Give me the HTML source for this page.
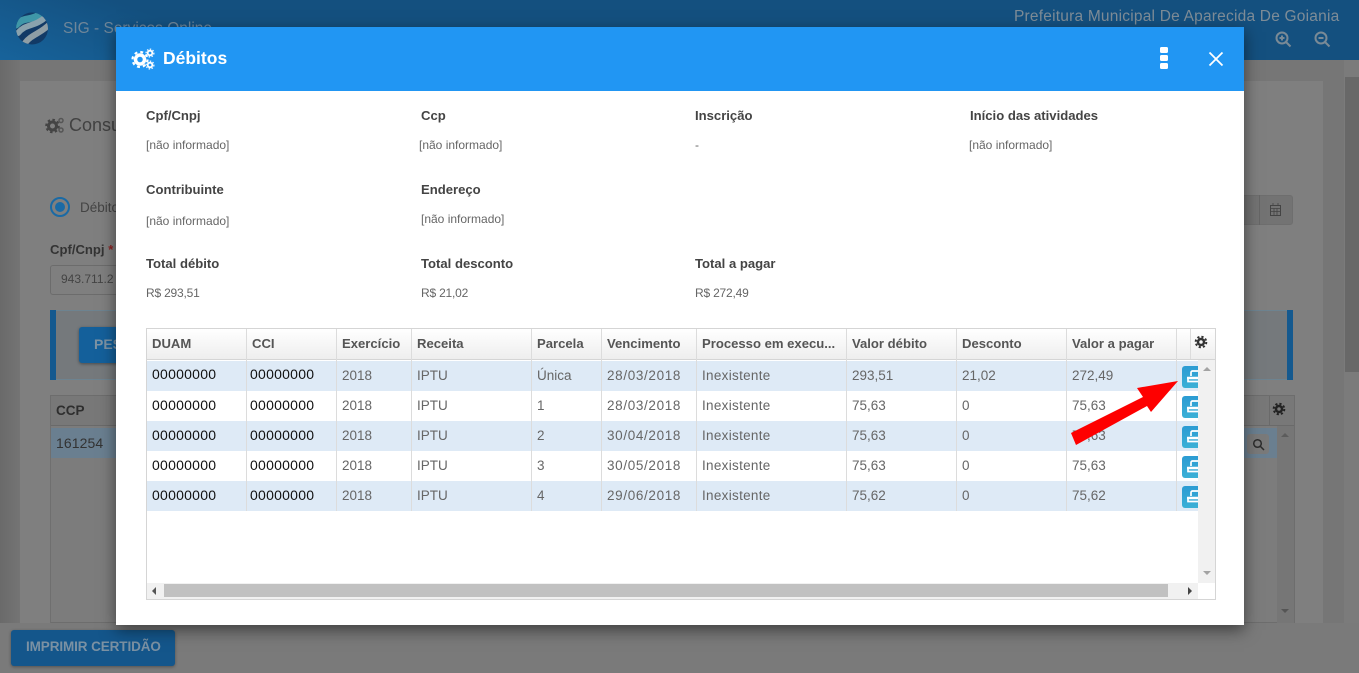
<!DOCTYPE html>
<html lang="pt"><head><meta charset="utf-8"><title>Débitos</title>
<style>
*{box-sizing:border-box}
html,body{margin:0;padding:0;width:1359px;height:673px;overflow:hidden;background:#7a7a7a;font-family:"Liberation Sans",sans-serif}
.a{position:absolute;white-space:nowrap}
.b{position:absolute}
.lbl{font-weight:bold;font-size:13.1px;color:#444;line-height:16px}
.val{font-size:12px;color:#666;line-height:14px}
.m{letter-spacing:-.2px}
.th{position:absolute;top:330px;height:30px;line-height:28px;font-weight:bold;font-size:13.1px;color:#555;padding-left:5px;white-space:nowrap;overflow:hidden}
.td{position:absolute;height:30px;line-height:30px;font-size:13.5px;color:#666;padding-left:5px;white-space:nowrap}
.d{letter-spacing:.65px}
.i{letter-spacing:.3px}
.z{color:#111;font-size:14px;letter-spacing:.25px}
.vl{position:absolute;width:1px;background:#dcdcdc}
.btn{position:absolute;left:1182px;width:16px;height:22px;background:linear-gradient(#2b9bd3,#3bb0d6);border-radius:3px 0 0 3px;overflow:hidden}
</style></head><body>

<!-- dimmed page -->
<div class="b" style="left:0;top:0;width:1359px;height:60px;background:#14507f;box-shadow:0 2px 5px rgba(0,0,0,.35)"></div>
<div class="b" style="left:0;top:0;width:340px;height:60px;background:linear-gradient(200deg,#14507f 45%,#17639b 100%)"></div>
<svg class="b" style="left:16px;top:12px" width="32" height="33" viewBox="0 0 32 33"><defs><clipPath id="c"><circle cx="16" cy="16.5" r="16"/></clipPath></defs><circle cx="16" cy="16.5" r="16" fill="#123a66"/><g clip-path="url(#c)" fill="none" stroke-linecap="round"><path d="M0 13 C8 4 14 10 26 1" stroke="#3f97a8" stroke-width="7"/><path d="M2 21 C10 11 18 16 31 4" stroke="#8aa2ad" stroke-width="6"/><path d="M9 31 C16 22 24 22 34 12" stroke="#8f9ea5" stroke-width="6"/></g></svg>
<div class="a" style="left:63px;top:20px;font-size:15.5px;color:#6f8699">SIG - Serviços Online</div>
<div class="a" style="left:1014px;top:8px;font-size:15.5px;color:#7e8c97;letter-spacing:.21px">Prefeitura Municipal De Aparecida De Goiania</div>
<svg class="b" style="left:1274px;top:30px" width="18" height="18" viewBox="0 0 18 18" fill="none" stroke="#7a8a96" stroke-width="2"><circle cx="8" cy="8" r="5.5"/><path d="M12 12l4.5 4.5M5.5 8h5M8 5.500v5"/></svg>
<svg class="b" style="left:1313px;top:30px" width="18" height="18" viewBox="0 0 18 18" fill="none" stroke="#7a8a96" stroke-width="2"><circle cx="8" cy="8" r="5.500"/><path d="M12 12l4.500 4.500M5.500 8h5"/></svg>

<div class="b" style="left:0;top:60px;width:20px;height:563px;background:linear-gradient(90deg,#6a6a6a,#747474)"></div>
<div class="b" style="left:20px;top:60px;width:1303px;height:21px;background:#767676"></div>
<div class="b" style="left:20px;top:81px;width:1303px;height:542px;background:#7f7f7f"></div>
<div class="b" style="left:1323px;top:60px;width:21px;height:563px;background:#767676"></div>
<div class="b" style="left:1344px;top:60px;width:15px;height:563px;background:#7b7b7b"></div>
<div class="b" style="left:1345px;top:77px;width:14px;height:295px;background:#686868"></div>

<svg class="b" style="left:45px;top:116px" width="20" height="18" viewBox="0 0 20 18"><circle cx="7.500" cy="10" r="4" fill="none" stroke="#444" stroke-width="3"/><circle cx="7.500" cy="10" r="6.300" fill="none" stroke="#444" stroke-width="2" stroke-dasharray="2.500 2.400"/><circle cx="16" cy="4.500" r="2" fill="none" stroke="#555" stroke-width="1.500"/><circle cx="16" cy="14" r="2" fill="none" stroke="#555" stroke-width="1.500"/></svg>
<div class="a" style="left:69px;top:115px;font-size:18px;color:#424242">Consulta</div>

<div class="b" style="left:50px;top:197px;width:20px;height:20px;border:2px solid #1a6aa5;border-radius:50%"></div>
<div class="b" style="left:55px;top:202px;width:10px;height:10px;background:#1a6aa5;border-radius:50%"></div>
<div class="a" style="left:80px;top:200px;font-size:13.5px;color:#444">Débito</div>
<div class="a" style="left:50px;top:242px;font-size:13.1px;font-weight:bold;color:#333">Cpf/Cnpj <span style="color:#8c2323">*</span></div>
<div class="b" style="left:50px;top:265px;width:80px;height:30px;border:1px solid #6c6c6c;border-radius:3px"></div>
<div class="a" style="left:61px;top:272px;font-size:12px;color:#444">943.711.2</div>

<div class="b" style="left:1230px;top:195px;width:63px;height:30px;background:#737373;border:1px solid #6e6e6e;border-radius:0 3px 3px 0"></div>
<div class="b" style="left:1259px;top:195px;width:1px;height:30px;background:#666"></div>
<svg class="b" style="left:1269px;top:203px" width="13" height="14" viewBox="0 0 13 14" fill="none" stroke="#444"><rect x="1.500" y="2.500" width="10" height="10"/><path d="M1.500 5.500h10M1.500 8.500h10M4 0v3M9 0v3M5 5.500v7M8 5.500v7" stroke-width=".8"/></svg>

<div class="b" style="left:50px;top:310px;width:1243px;height:70px;background:#75797c;border-top:1px solid #6d8390;border-bottom:1px solid #6d8390"></div>
<div class="b" style="left:50px;top:310px;width:6px;height:70px;background:#14598f"></div>
<div class="b" style="left:1287px;top:310px;width:6px;height:70px;background:#14598f"></div>
<div class="b" style="left:79px;top:327px;width:60px;height:36px;background:#14609b;border-radius:3px;box-shadow:0 1px 3px rgba(0,0,0,.4)"></div>
<div class="a" style="left:94px;top:336px;font-size:14px;font-weight:bold;color:#7d93a4">PES</div>

<div class="b" style="left:50px;top:395px;width:1245px;height:228px;background:#7c7c7c;border:1px solid #6d6d6d"></div>
<div class="b" style="left:51px;top:396px;width:1243px;height:30px;background:#787878;border-bottom:1px solid #6a6a6a"></div>
<div class="a" style="left:56px;top:403px;font-size:13.5px;font-weight:bold;color:#2e2e2e">CCP</div>
<div class="b" style="left:1269px;top:396px;width:1px;height:30px;background:#6a6a6a"></div>
<svg class="b" style="left:1272px;top:402px" width="14" height="14" viewBox="0 0 14 14" fill="none" stroke="#222"><circle cx="7" cy="7" r="3" stroke-width="2.500"/><circle cx="7" cy="7" r="5.300" stroke-width="2" stroke-dasharray="2.200 2"/></svg>
<div class="b" style="left:51px;top:428px;width:1226px;height:30px;background:#6a7f90"></div>
<div class="a" style="left:56px;top:435px;font-size:14px;color:#333;letter-spacing:.1px">161254</div>
<div class="b" style="left:1247px;top:434px;width:22px;height:20px;background:#7a7a7a;border-radius:3px"></div>
<svg class="b" style="left:1252px;top:438px" width="13" height="13" viewBox="0 0 13 13" fill="none" stroke="#2c2c2c" stroke-width="1.500"><circle cx="5.500" cy="5.500" r="3.800"/><path d="M8.500 8.500l3.500 3.500"/></svg>
<div class="b" style="left:1277px;top:426px;width:17px;height:197px;background:#767676"></div>
<div class="b" style="left:1281px;top:433px;border:4px solid transparent;border-top:0;border-bottom:4px solid #5c5c5c"></div>
<div class="b" style="left:1281px;top:609px;border:4px solid transparent;border-bottom:0;border-top:4px solid #555"></div>
<div class="b" style="left:50px;top:426px;width:1px;height:197px;background:#6f6f6f"></div>

<div class="b" style="left:0;top:623px;width:1359px;height:50px;background:#7a7a7a"></div>
<div class="b" style="left:11px;top:630px;width:164px;height:36px;background:#14568b;border-radius:3px;box-shadow:0 1px 3px rgba(0,0,0,.35)"></div>
<div class="a" style="left:26px;top:639px;font-size:13.5px;font-weight:bold;color:#7b91a3;letter-spacing:-.1px">IMPRIMIR CERTIDÃO</div>

<!-- modal -->
<div class="b" style="left:116px;top:27px;width:1128px;height:598px;background:#fff;box-shadow:0 5px 15px rgba(0,0,0,.5)"></div>
<div class="b" style="left:116px;top:27px;width:1128px;height:64px;background:#2196f3"></div>
<svg class="b" style="left:131px;top:48px" width="24" height="22" viewBox="0 0 24 22"><circle cx="9" cy="11.500" r="4.500" fill="none" stroke="#fff" stroke-width="3.500"/><circle cx="9" cy="11.500" r="7.500" fill="none" stroke="#fff" stroke-width="2.200" stroke-dasharray="2.900 3"/><circle cx="19" cy="5" r="2.300" fill="none" stroke="#fff" stroke-width="1.800"/><circle cx="19" cy="5" r="3.900" fill="none" stroke="#fff" stroke-width="1.200" stroke-dasharray="1.500 1.500"/><circle cx="19" cy="17" r="2.300" fill="none" stroke="#fff" stroke-width="1.800"/><circle cx="19" cy="17" r="3.900" fill="none" stroke="#fff" stroke-width="1.200" stroke-dasharray="1.500 1.500"/></svg>
<div class="a" style="left:163px;top:47px;font-size:17.5px;font-weight:bold;color:#fff;line-height:22px">Débitos</div>
<div class="b" style="left:1160px;top:47px;width:8px;height:6px;background:#fff;border-radius:1.500px"></div>
<div class="b" style="left:1160px;top:55px;width:8px;height:6px;background:#fff;border-radius:1.500px"></div>
<div class="b" style="left:1160px;top:63px;width:8px;height:6px;background:#fff;border-radius:1.500px"></div>
<svg class="b" style="left:1208px;top:51px" width="16" height="16" viewBox="0 0 16 16" stroke="#fff" stroke-width="1.800"><path d="M1.500 1.500l13 13M14.500 1.500l-13 13"/></svg>

<div class="a lbl" style="left:146px;top:108px">Cpf/Cnpj</div>
<div class="a lbl" style="left:421px;top:108px">Ccp</div>
<div class="a lbl" style="left:695px;top:108px">Inscrição</div>
<div class="a lbl" style="left:970px;top:108px">Início das atividades</div>
<div class="a val" style="left:146px;top:138px">[não informado]</div>
<div class="a val" style="left:419px;top:138px">[não informado]</div>
<div class="a val" style="left:695px;top:138px">-</div>
<div class="a val" style="left:969px;top:138px">[não informado]</div>
<div class="a lbl" style="left:146px;top:182px">Contribuinte</div>
<div class="a lbl" style="left:421px;top:182px">Endereço</div>
<div class="a val" style="left:146px;top:214px">[não informado]</div>
<div class="a val" style="left:421px;top:212px">[não informado]</div>
<div class="a lbl" style="left:146px;top:256px">Total débito</div>
<div class="a lbl" style="left:421px;top:256px">Total desconto</div>
<div class="a lbl" style="left:695px;top:256px">Total a pagar</div>
<div class="a val m" style="left:146px;top:286px">R$ 293,51</div>
<div class="a val m" style="left:421px;top:286px">R$ 21,02</div>
<div class="a val m" style="left:695px;top:286px">R$ 272,49</div>

<!-- grid -->
<div class="b" style="left:146px;top:328px;width:1070px;height:272px;border:1px solid #d5d5d5;background:#fff"></div>
<div class="b" style="left:147px;top:329px;width:1068px;height:31px;background:linear-gradient(#fff,#eee);border-bottom:1px solid #d5d5d5"></div>
<div class="b" style="left:147px;top:361px;width:1051px;height:30px;background:#deeaf6"></div>
<div class="b" style="left:147px;top:421px;width:1051px;height:30px;background:#deeaf6"></div>
<div class="b" style="left:147px;top:481px;width:1051px;height:30px;background:#deeaf6"></div>
<div class="b" style="left:1198px;top:360px;width:17px;height:223px;background:#f1f1f1"></div>
<div class="b" style="left:147px;top:583px;width:1051px;height:16px;background:#f1f1f1"></div>
<div class="b" style="left:164px;top:584px;width:1004px;height:13px;background:#c1c1c1"></div>
<div class="b" style="left:1203px;top:367px;border:4px solid transparent;border-top:0;border-bottom:4px solid #a3a3a3"></div>
<div class="b" style="left:1203px;top:571px;border:4px solid transparent;border-bottom:0;border-top:4px solid #a3a3a3"></div>
<div class="b" style="left:152px;top:587px;border:4px solid transparent;border-left:0;border-right:4px solid #555"></div>
<div class="b" style="left:1188px;top:587px;border:4px solid transparent;border-right:0;border-left:4px solid #444"></div>

<div class="vl" style="left:246px;top:329px;height:182px"></div>
<div class="vl" style="left:336px;top:329px;height:182px"></div>
<div class="vl" style="left:411px;top:329px;height:182px"></div>
<div class="vl" style="left:531px;top:329px;height:182px"></div>
<div class="vl" style="left:601px;top:329px;height:182px"></div>
<div class="vl" style="left:696px;top:329px;height:182px"></div>
<div class="vl" style="left:846px;top:329px;height:182px"></div>
<div class="vl" style="left:956px;top:329px;height:182px"></div>
<div class="vl" style="left:1066px;top:329px;height:182px"></div>
<div class="vl" style="left:1176px;top:329px;height:182px"></div>
<div class="vl" style="left:1190px;top:329px;height:30px"></div>

<div class="th" style="left:147px">DUAM</div>
<div class="th" style="left:247px">CCI</div>
<div class="th" style="left:337px">Exercício</div>
<div class="th" style="left:412px">Receita</div>
<div class="th" style="left:532px">Parcela</div>
<div class="th" style="left:602px">Vencimento</div>
<div class="th" style="left:697px">Processo em execu...</div>
<div class="th" style="left:847px">Valor débito</div>
<div class="th" style="left:957px">Desconto</div>
<div class="th" style="left:1067px">Valor a pagar</div>
<svg class="b" style="left:1194px;top:335px" width="14" height="14" viewBox="0 0 14 14" fill="none" stroke="#333"><circle cx="7" cy="7" r="3" stroke-width="2.500"/><circle cx="7" cy="7" r="5.300" stroke-width="2" stroke-dasharray="2.200 2"/></svg>

<div class="td z" style="left:147px;top:359px">00000000</div><div class="td z" style="left:245px;top:359px">00000000</div><div class="td" style="left:337px;top:361px">2018</div><div class="td" style="left:412px;top:361px">IPTU</div><div class="td" style="left:532px;top:361px">Única</div><div class="td d" style="left:602px;top:361px">28/03/2018</div><div class="td i" style="left:697px;top:361px">Inexistente</div><div class="td" style="left:847px;top:361px">293,51</div><div class="td" style="left:957px;top:361px">21,02</div><div class="td" style="left:1067px;top:361px">272,49</div>
<div class="td z" style="left:147px;top:390px">00000000</div><div class="td z" style="left:245px;top:390px">00000000</div><div class="td" style="left:337px;top:391px">2018</div><div class="td" style="left:412px;top:391px">IPTU</div><div class="td" style="left:532px;top:391px">1</div><div class="td d" style="left:602px;top:391px">28/03/2018</div><div class="td i" style="left:697px;top:391px">Inexistente</div><div class="td" style="left:847px;top:391px">75,63</div><div class="td" style="left:957px;top:391px">0</div><div class="td" style="left:1067px;top:391px">75,63</div>
<div class="td z" style="left:147px;top:420px">00000000</div><div class="td z" style="left:245px;top:420px">00000000</div><div class="td" style="left:337px;top:421px">2018</div><div class="td" style="left:412px;top:421px">IPTU</div><div class="td" style="left:532px;top:421px">2</div><div class="td d" style="left:602px;top:421px">30/04/2018</div><div class="td i" style="left:697px;top:421px">Inexistente</div><div class="td" style="left:847px;top:421px">75,63</div><div class="td" style="left:957px;top:421px">0</div><div class="td" style="left:1067px;top:421px">75,63</div>
<div class="td z" style="left:147px;top:450px">00000000</div><div class="td z" style="left:245px;top:450px">00000000</div><div class="td" style="left:337px;top:451px">2018</div><div class="td" style="left:412px;top:451px">IPTU</div><div class="td" style="left:532px;top:451px">3</div><div class="td d" style="left:602px;top:451px">30/05/2018</div><div class="td i" style="left:697px;top:451px">Inexistente</div><div class="td" style="left:847px;top:451px">75,63</div><div class="td" style="left:957px;top:451px">0</div><div class="td" style="left:1067px;top:451px">75,63</div>
<div class="td z" style="left:147px;top:480px">00000000</div><div class="td z" style="left:245px;top:480px">00000000</div><div class="td" style="left:337px;top:481px">2018</div><div class="td" style="left:412px;top:481px">IPTU</div><div class="td" style="left:532px;top:481px">4</div><div class="td d" style="left:602px;top:481px">29/06/2018</div><div class="td i" style="left:697px;top:481px">Inexistente</div><div class="td" style="left:847px;top:481px">75,62</div><div class="td" style="left:957px;top:481px">0</div><div class="td" style="left:1067px;top:481px">75,62</div>

<div class="btn" style="top:366px"><svg width="16" height="22" fill="none" stroke="#fff"><path d="M9 10V6.500a1.500 1.500 0 0 1 1.500-1.500H16" stroke-width="1.700"/><path d="M5 12h11" stroke-width="2.400"/><path d="M6 13v2.500h10" stroke-width="1.700"/></svg></div>
<div class="btn" style="top:396px"><svg width="16" height="22" fill="none" stroke="#fff"><path d="M9 10V6.500a1.500 1.500 0 0 1 1.500-1.500H16" stroke-width="1.700"/><path d="M5 12h11" stroke-width="2.400"/><path d="M6 13v2.500h10" stroke-width="1.700"/></svg></div>
<div class="btn" style="top:426px"><svg width="16" height="22" fill="none" stroke="#fff"><path d="M9 10V6.500a1.500 1.500 0 0 1 1.500-1.500H16" stroke-width="1.700"/><path d="M5 12h11" stroke-width="2.400"/><path d="M6 13v2.500h10" stroke-width="1.700"/></svg></div>
<div class="btn" style="top:456px"><svg width="16" height="22" fill="none" stroke="#fff"><path d="M9 10V6.500a1.500 1.500 0 0 1 1.500-1.500H16" stroke-width="1.700"/><path d="M5 12h11" stroke-width="2.400"/><path d="M6 13v2.500h10" stroke-width="1.700"/></svg></div>
<div class="btn" style="top:486px"><svg width="16" height="22" fill="none" stroke="#fff"><path d="M9 10V6.500a1.500 1.500 0 0 1 1.500-1.500H16" stroke-width="1.700"/><path d="M5 12h11" stroke-width="2.400"/><path d="M6 13v2.500h10" stroke-width="1.700"/></svg></div>

<!-- red arrow -->
<svg class="b" style="left:0;top:0" width="1359" height="673"><polygon points="1178,381 1137,388 1143,397 1071,433 1076,445 1147,406 1151,412" fill="#fe0000"/></svg>
</body></html>
